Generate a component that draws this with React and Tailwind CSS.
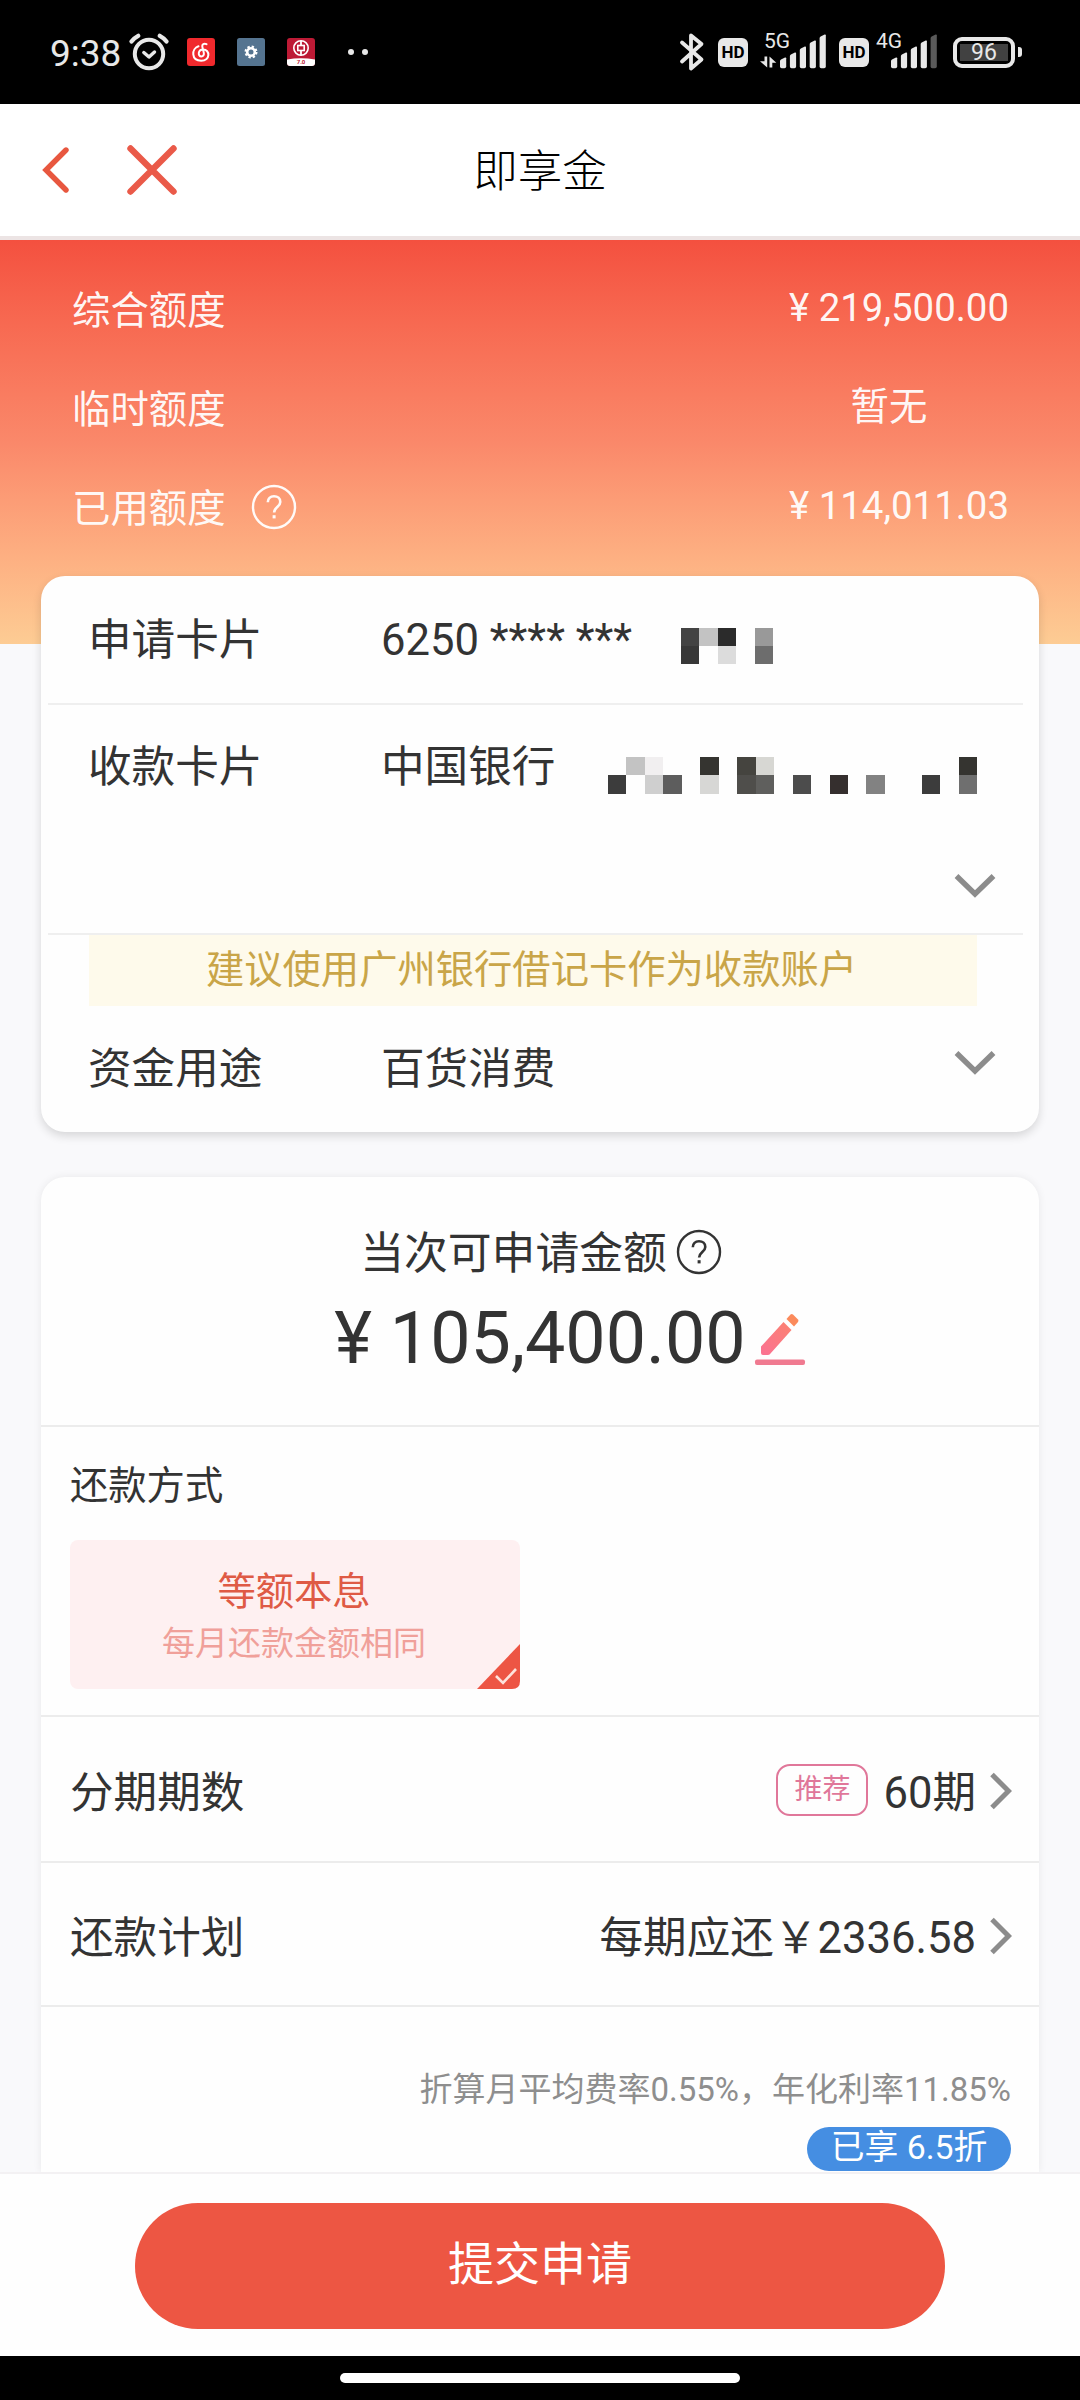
import React from "react";

const RECEIVE_MOSAIC = [
  ["", "#c3c3c3", "#f1eff0", "", "", "#353430", "", "#45443f", "#d7d7d3", "", "", "", "", "", "", "", "", "", "", "#353430"],
  ["#3c3c3c", "", "#cfcfcf", "#5d5d5d", "", "#d7d7d5", "", "#4f4e4b", "#5f5f5d", "", "#4c4c4c", "", "#352f2e", "", "#828282", "", "", "#3c3c3c", "", "#6f6f6f"],
];

const APPLY_MOSAIC = [
  ["#434343", "#c3c3c3", "#2b2b2b", "", "#999999"],
  ["#383838", "", "#dcdcdc", "", "#6d6d6d"],
];

// Hides the digits of a card number behind coarse blocks.
function Mosaic({ rows, className }) {
  const size = 18.46;
  return (
    <svg
      className={className}
      width={rows[0].length * size}
      height={rows.length * size}
      shapeRendering="crispEdges"
      aria-hidden="true"
    >
      {rows.map((row, y) =>
        row.map((fill, x) =>
          fill ? (
            <rect key={`${x}_${y}`} x={x * size} y={y * size} width={size} height={size} fill={fill} />
          ) : null,
        ),
      )}
    </svg>
  );
}

function HelpIcon({ className }) {
  return (
    <svg className={className} width="46" height="46" viewBox="0 0 46 46" fill="none" stroke="currentColor">
      <circle cx="23" cy="23" r="21" strokeWidth="2.4" />
      <path d="M16.8 18.2c0-3.6 2.5-6 6.2-6s6.3 2.3 6.3 5.7c0 5-6.2 5.2-6.2 10.6" strokeWidth="2.6" />
      <path d="M23.1 31.2v3.2" strokeWidth="3" />
    </svg>
  );
}

function ChevronDown() {
  return (
    <svg width="42" height="26" viewBox="0 0 42 26" fill="none" stroke="#8c8c8c" strokeWidth="5.4">
      <path d="M2.5 3 21 21 39.5 3" />
    </svg>
  );
}

function ChevronRight() {
  return (
    <svg width="22" height="38" viewBox="0 0 22 38" fill="none" stroke="#8c8c8c" strokeWidth="5">
      <path d="M2 2.5 18.5 19 2 35.5" />
    </svg>
  );
}

function PencilIcon() {
  return (
    <svg width="52" height="54" viewBox="0 0 52 54">
      <defs>
        <linearGradient id="pencil" x1="1" y1="0" x2="0.2" y2="1">
          <stop offset="0" stopColor="#fb8270" />
          <stop offset="1" stopColor="#fb7390" />
        </linearGradient>
      </defs>
      <path d="M7 34.500 29.500 10l8 8L16.500 41.500q-1 1.500-3 1.500H9q-2 0-2-2z" fill="url(#pencil)" />
      <path d="m32.500 7 4-4.500q1.300-1 2.500 0l5 5q1 1.300 0 2.500l-4 4.500z" fill="#fb8a5c" />
      <rect x="1" y="47.500" width="50" height="5.500" rx="2" fill="#f07a90" />
    </svg>
  );
}

function AlarmIcon() {
  return (
    <svg width="40" height="38" viewBox="0 0 40 38" fill="none" stroke="#e8e8e8" strokeLinecap="round">
      <circle cx="20" cy="21" r="14.2" strokeWidth="4" />
      <path d="m14.8 19.5 5.2 4.500 5.500-5" strokeWidth="3.4" strokeLinejoin="round" />
      <path d="M2.500 8.500Q5 5 9.200 2.800M37.500 8.500Q35 5 30.800 2.800" strokeWidth="4.2" />
    </svg>
  );
}

function MusicAppIcon() {
  return (
    <svg width="28" height="28" viewBox="0 0 28 28" fill="none" stroke="#fff" strokeWidth="2" strokeLinecap="round">
      <rect width="28" height="28" rx="3" fill="#f0292d" stroke="none" />
      <path d="M19.500 6.200c-2.500-1.200-4.700.2-4.200 2.400l1.500 6.200c.5 2.200-.7 3.600-2.400 3.600-3.800 0-3.700-6.900 1.800-6.900 7 0 7.400 11.200-2 11.200C4 22.700 4.200 10.700 11.500 8.300" />
    </svg>
  );
}

function GearAppIcon() {
  return (
    <svg width="28" height="28" viewBox="0 0 28 28">
      <rect width="28" height="28" rx="2.5" fill="#557490" />
      <circle cx="14" cy="14" r="5.4" fill="none" stroke="#fff" strokeWidth="2.2" strokeDasharray="2.3 1.941" />
      <circle cx="14" cy="14" r="3.8" fill="none" stroke="#fff" strokeWidth="2.6" />
    </svg>
  );
}

function BankAppIcon() {
  return (
    <svg width="28" height="28" viewBox="0 0 28 28" fill="none" stroke="#fff">
      <rect width="28" height="28" rx="3" fill="#bd1a35" stroke="none" />
      <path d="M0 21.500Q14 19 28 21.500V25a3 3 0 0 1-3 3H3a3 3 0 0 1-3-3z" fill="#fff" stroke="none" />
      <circle cx="14" cy="10" r="7.2" strokeWidth="1.6" />
      <path d="M14 3v4.500M14 12.500v5" strokeWidth="1.8" />
      <rect x="10.800" y="7.500" width="6.400" height="5" strokeWidth="1.6" />
      <text x="14" y="26.300" textAnchor="middle" fontSize="6" fontWeight="700" fill="#bd1a35" stroke="none">
        7.0
      </text>
    </svg>
  );
}

function BluetoothIcon() {
  return (
    <svg width="26" height="40" viewBox="0 0 26 40" fill="none" stroke="#e8e8e8" strokeWidth="3.8" strokeLinejoin="round" strokeLinecap="round">
      <path d="M3 10.500 22.500 27.500 12 36.500V3.500L22.500 12 3 29.500" />
    </svg>
  );
}

function HdBadge({ className }) {
  return (
    <div className={`flex h-[29px] w-[30px] items-center justify-center rounded-[6px] bg-[#e8e8e8] text-[17px] leading-none font-bold text-black ${className}`}>
      HD
    </div>
  );
}

function Signal({ label, arrows, dimLast }) {
  const tops = [25, 20, 14, 8, 2];
  const start = arrows ? 20 : 16;
  return (
    <svg width="68" height="54" viewBox="0 -8 68 54" fill="#e8e8e8">
      <text x={arrows ? 4 : 1} y="15" fontSize="21">
        {label}
      </text>
      {arrows ? <path d="M4.500 23.500h2.700V34.500L0 28.300h4.500zM9.500 34.500V23.500l6.800 6.200h-4v4.800z" /> : null}
      {tops.map((top, i) => (
        <path
          key={top}
          d={`M${start + i * 9.9} ${top + 3}q0-1 1-1.500l4-2q1.200-.4 1.200.8V33.500q0 1.700-1.700 1.700h-2.800q-1.700 0-1.700-1.700z`}
          fill={dimLast && i === 4 ? "#5a5a5a" : "#e8e8e8"}
        />
      ))}
    </svg>
  );
}

function StatusBar() {
  return (
    <div className="flex h-[104px] items-center justify-between bg-black pr-[58px] pl-[50px] text-[#e8e8e8]">
      <div className="flex items-center">
        <span className="w-[79px] pt-[2px] text-[37px] leading-none">9:38</span>
        <AlarmIcon />
        <div className="ml-[18px] flex gap-[22px]">
          <MusicAppIcon />
          <GearAppIcon />
          <BankAppIcon />
        </div>
        <div className="ml-[33px] flex gap-2">
          <span className="size-[6px] rounded-full bg-[#e8e8e8]" />
          <span className="size-[6px] rounded-full bg-[#e8e8e8]" />
        </div>
      </div>
      <div className="flex items-center">
        <BluetoothIcon />
        <HdBadge className="mr-[12px] ml-[13px]" />
        <Signal label="5G" arrows />
        <HdBadge className="mr-[6px] ml-[11px]" />
        <Signal label="4G" dimLast />
        <div className="ml-[10px] flex h-[31px] w-[62px] rounded-[9px] border-4 border-[#e8e8e8] p-[3px]">
          <div className="flex flex-1 items-center justify-center bg-[#414141] text-[23px] leading-none">96</div>
        </div>
        <span className="ml-[3px] h-[10px] w-[4px] rounded-r-[3px] bg-[#e8e8e8]" />
      </div>
    </div>
  );
}

function TitleBar() {
  return (
    <div className="grid h-[136px] grid-cols-3 items-center border-b-4 border-[#ece4e4] bg-white">
      <div className="flex items-center gap-[57px] pl-[42px]">
        <svg width="28" height="46" viewBox="0 0 28 46" fill="none" stroke="#e8573f" strokeWidth="5.4" strokeLinecap="round">
          <path d="M24 3 4 23l20 20" />
        </svg>
        <svg width="50" height="50" viewBox="0 0 50 50" fill="none" stroke="#ea5a49" strokeWidth="6.4" strokeLinecap="round">
          <path d="m3.500 3.500 43 43M46.500 3.500l-43 43" />
        </svg>
      </div>
      <h1 className="pt-[4px] text-center text-[44.5px] leading-none font-light text-black">即享金</h1>
    </div>
  );
}

function LimitRow({ label, value, help, center }) {
  return (
    <div className="flex h-[99px] items-center justify-between">
      <div className="flex items-center gap-[25px]">
        <span className="pt-[3px]">{label}</span>
        {help ? <HelpIcon className="mb-[2px]" /> : null}
      </div>
      <div className={`min-w-[240px] pb-[3px] ${center ? "text-center" : "text-right"}`}>{value}</div>
    </div>
  );
}

function CardPanel() {
  return (
    <div className="mx-[41px] -mt-[68px] h-[556px] rounded-[24px] bg-[#fefefe] pr-4 pl-[7px] text-[43.6px] shadow-[0_4px_10px_rgba(0,0,0,0.14)]">
      <div className="flex h-[129px] items-center border-b-2 border-[#efefef] pl-[40px]">
        <span className="w-[293px] pt-[3px]">申请卡片</span>
        <span className="pt-[3px]">6250 **** ***</span>
        <Mosaic rows={APPLY_MOSAIC} className="mt-[13px] ml-[49px]" />
      </div>
      <div className="flex h-[230px] flex-col border-b-2 border-[#efefef] pl-[40px]">
        <div className="flex h-[122px] items-center">
          <span className="w-[293px] pt-[3px]">收款卡片</span>
          <span className="pt-[3px]">中国银行</span>
          <Mosaic rows={RECEIVE_MOSAIC} className="mt-[19px] ml-[53px]" />
        </div>
        <div className="mt-[46px] mr-[27px] flex justify-end">
          <ChevronDown />
        </div>
      </div>
      <div className="mr-[46px] ml-[41px] flex h-[71px] items-center justify-center bg-[#fefaeb] pr-[3px] text-[38.3px] text-[#c9a548]">
        建议使用广州银行借记卡作为收款账户
      </div>
      <div className="flex h-[122px] items-center pl-[40px]">
        <span className="w-[293px] pt-[6px]">资金用途</span>
        <span className="pt-[6px]">百货消费</span>
        <div className="mr-[27px] mb-[8px] ml-auto">
          <ChevronDown />
        </div>
      </div>
    </div>
  );
}

function InstallmentPanel() {
  return (
    <div className="mx-[41px] mt-[45px] flex-1 rounded-t-[24px] bg-[#fefefe] text-[43.6px] shadow-[0_0_8px_rgba(0,0,0,0.07)]">
      <div className="flex h-[250px] flex-col items-center border-b-2 border-[#ececec] pt-[51px]">
        <div className="flex items-center gap-[9px] pl-[2px]">
          <span className="text-[43.8px] leading-[52px]">当次可申请金额</span>
          <HelpIcon className="mb-[5px]" />
        </div>
        <div className="mt-[17px] flex items-center gap-[8px] pl-[60px]">
          <span className="text-[71.8px] leading-[84px]">¥ 105,400.00</span>
          <PencilIcon />
        </div>
      </div>

      <div className="h-[290px] border-b-2 border-[#ececec] px-[29px] pt-[36px]">
        <div className="text-[38.3px] leading-[46px]">还款方式</div>
        <div className="relative mt-[31px] flex h-[149px] w-[450px] flex-col items-center rounded-[8px] bg-[#fef0f1] pt-[27px] pr-[2px]">
          <div className="text-[38.3px] leading-[50px] text-[#df5a45]">等额本息</div>
          <div className="text-[33px] leading-[54px] text-[#f0a09a]">每月还款金额相同</div>
          <svg className="absolute right-0 bottom-0" width="43" height="45" viewBox="0 0 43 45">
            <path d="M43 0v37q0 8-8 8H0z" fill="#ed5544" />
            <path d="m19 32 7 7 13-14" fill="none" stroke="#fde3dc" strokeWidth="2.6" />
          </svg>
        </div>
      </div>

      <div className="flex h-[146px] items-center border-b-2 border-[#ececec] pt-[4px] pr-[27px] pl-[29px]">
        <span className="pt-[5px]">分期期数</span>
        <span className="mr-[15px] mb-[2px] ml-auto flex h-[52px] w-[92px] items-center justify-center rounded-[14px] border-2 border-[#e0779a] text-[28px] text-[#e0779a]">
          推荐
        </span>
        <span className="mr-[14px] pt-[5px]">60期</span>
        <div>
          <ChevronRight />
        </div>
      </div>

      <div className="flex h-[144px] items-center border-b-2 border-[#ececec] pt-[4px] pr-[27px] pl-[29px]">
        <span className="pt-[5px]">还款计划</span>
        <span className="mr-[14px] ml-auto pt-[5px]">每期应还￥2336.58</span>
        <div>
          <ChevronRight />
        </div>
      </div>

      <div className="flex flex-col items-end pt-[60px] pr-[28px]">
        <div className="text-[33px] leading-[46px] text-[#8e8e8e]">折算月平均费率0.55%，年化利率11.85%</div>
        <div className="mt-[14px] flex h-[44px] w-[204px] items-center justify-center rounded-full bg-[#458ee2] text-[33.8px] text-white">
          <span className="pb-[2px]">已享 6.5折</span>
        </div>
      </div>
    </div>
  );
}

export default function App() {
  return (
    <div className="flex h-[2400px] w-[1080px] flex-col overflow-hidden bg-[#f9f9fb] font-[Roboto,'Noto_Sans_CJK_SC',sans-serif] leading-none text-[#333333]">
      <StatusBar />
      <TitleBar />
      <div className="h-[404px] bg-linear-to-b from-[#f4503f] via-[#fa886a] to-[#fdcc94] pt-[20px] pr-[71px] pl-[72px] text-[38.4px] text-white/95">
        <LimitRow label="综合额度" value="¥ 219,500.00" />
        <LimitRow label="临时额度" value="暂无" center />
        <LimitRow label="已用额度" value="¥ 114,011.03" help />
      </div>
      <CardPanel />
      <InstallmentPanel />
      <div className="h-[184px] border-t-2 border-[#f3f1f3] bg-[#fefefe] px-[135px] pt-[29px]">
        <button
          type="button"
          className="flex h-[126px] w-full items-center justify-center rounded-full bg-[#ed5643] pb-[4px] text-[46px] text-white"
        >
          提交申请
        </button>
      </div>
      <div className="flex h-[44px] items-start justify-center bg-black pt-[17px]">
        <div className="h-[10px] w-[400px] rounded-full bg-white" />
      </div>
    </div>
  );
}
